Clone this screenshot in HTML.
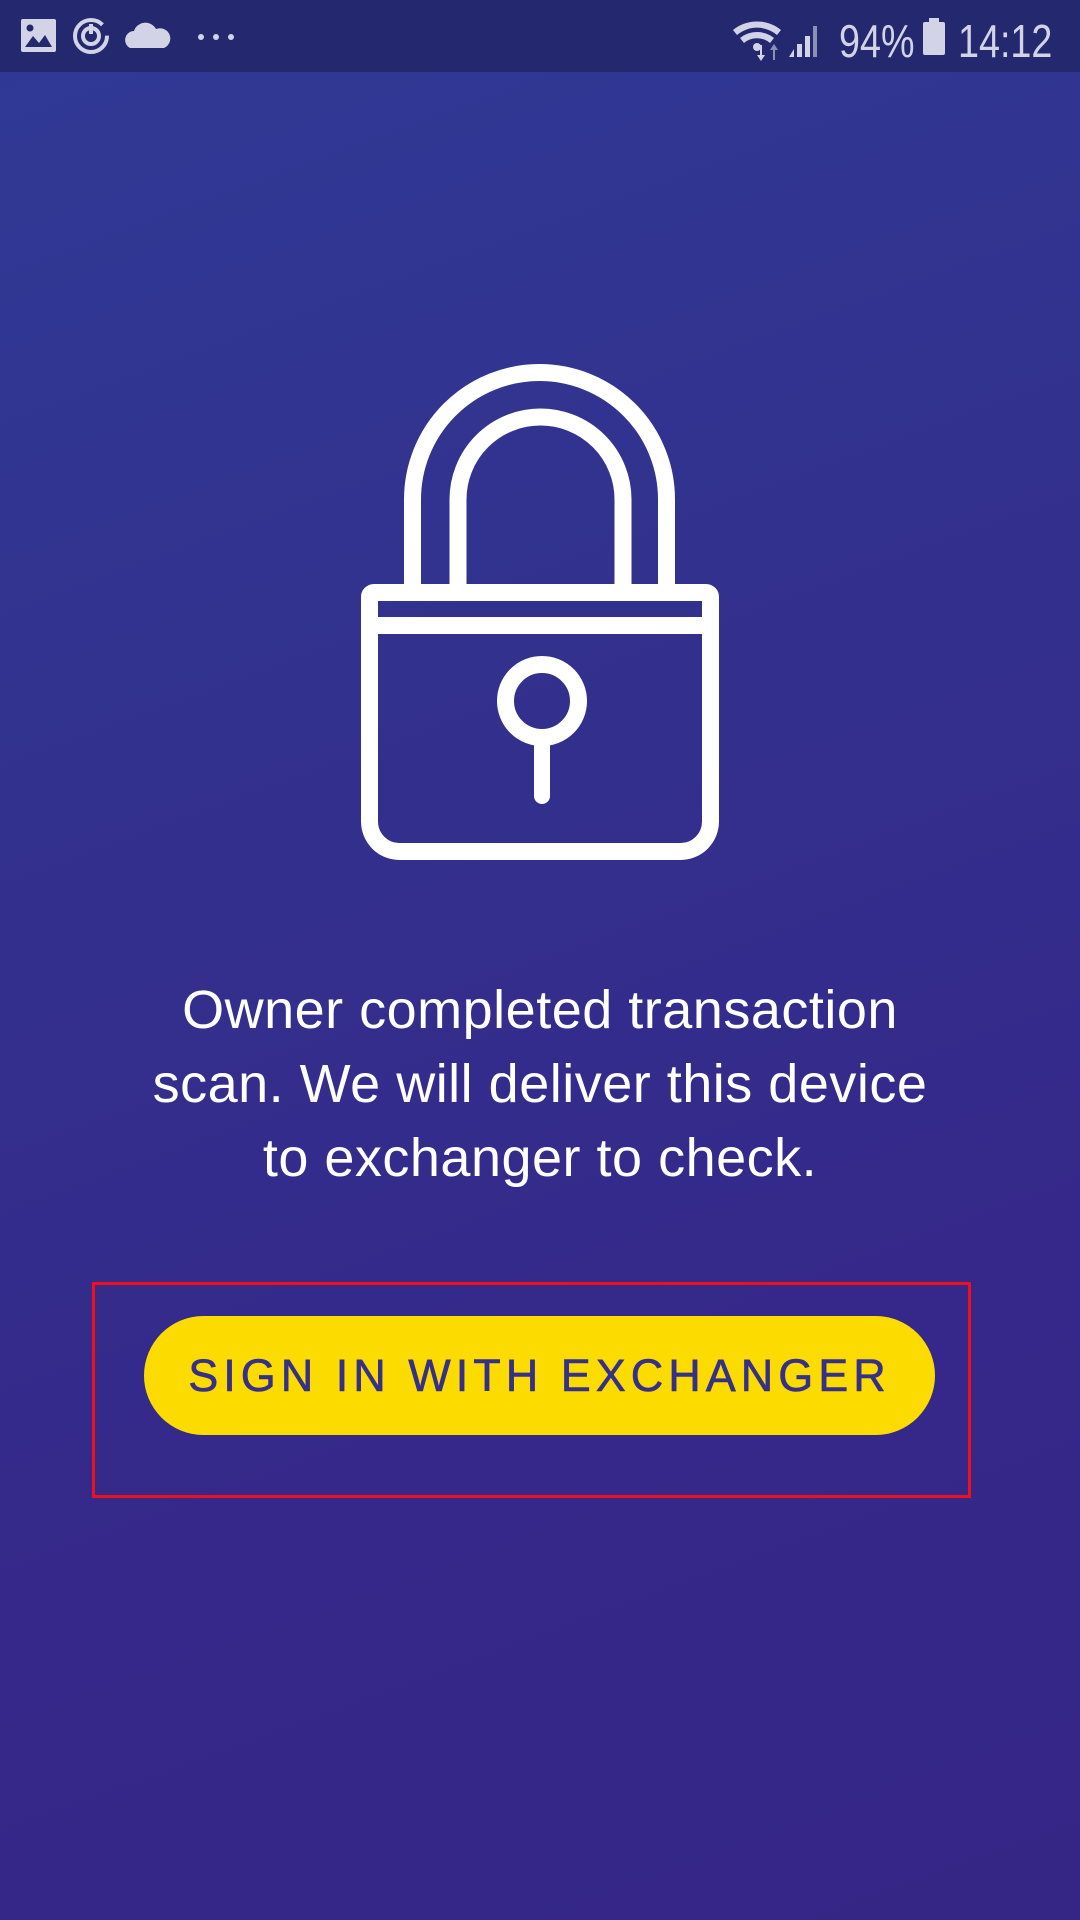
<!DOCTYPE html>
<html><head><meta charset="utf-8"><style>
html,body{margin:0;padding:0}
body{width:1080px;height:1920px;position:relative;overflow:hidden;
background:linear-gradient(160deg,#2f3a96 0%,#33308d 40%,#35288a 70%,#352686 100%);
font-family:"Liberation Sans",sans-serif}
.sb{position:absolute;left:0;top:0;width:1080px;height:72px;background:#24286e}
.sbt{position:absolute;top:14px;color:#d2d3e6;font-size:46px;transform:scaleX(.82);transform-origin:left top;font-family:"Liberation Sans Narrow","Liberation Sans",sans-serif}
.msg{position:absolute;left:0;width:1080px;top:973px;text-align:center;color:#fff;font-size:54px;line-height:74px;letter-spacing:0.5px}
.btn{position:absolute;left:144px;top:1316px;width:791px;height:119px;border-radius:60px;background:#fcdc00;color:#35308a;font-size:45px;letter-spacing:5px;text-align:center;line-height:119px;-webkit-text-stroke:0.6px #35308a}
.red{position:absolute;left:92px;top:1282px;width:873px;height:210px;border:3px solid #f0101c}
</style></head><body>
<div class="sb">
<svg width="1080" height="72" style="position:absolute;left:0;top:0" fill="#d2d3e6">
<rect x="21" y="19" width="35" height="33" rx="2"/>
<path d="M25 47 L33 36 L39 43 L45 35 L52 47 Z" fill="#24286e"/>
<circle cx="30" cy="28" r="3.5" fill="#24286e"/>
<circle cx="91" cy="36" r="16" fill="none" stroke="#d2d3e6" stroke-width="4" stroke-dasharray="88 12"/>
<circle cx="91" cy="36" r="8" fill="none" stroke="#d2d3e6" stroke-width="4"/>
<rect x="89" y="24" width="4" height="10"/>
<path d="M130 48 a9 9 0 0 1 4-17 a12 12 0 0 1 22-2 a10 10 0 0 1 8 19 Z"/>
<circle cx="201" cy="37" r="3"/><circle cx="216" cy="37" r="3"/><circle cx="231" cy="37" r="3"/>
<path d="M733 30 a38 38 0 0 1 48 0 l-4 5 a31 31 0 0 0 -40 0 Z"/>
<path d="M740 38 a27 27 0 0 1 34 0 l-4 5 a20 20 0 0 0 -26 0 Z"/>
<circle cx="757" cy="47" r="4"/>
<path d="M760 45 v10 h-3 l4 6 l4-6 h-3 v-10z"/>
<path d="M773 60 v-10 h-3 l4-6 l4 6 h-3 v10z" opacity=".6"/>
<path d="M789 57 h5 v-8 l-5 8z"/><rect x="797" y="44" width="5" height="13"/><rect x="805" y="36" width="5" height="21"/><rect x="813" y="26" width="4" height="31" opacity=".6"/>
<rect x="923" y="22" width="22" height="33" rx="2"/><rect x="929" y="18" width="10" height="5"/>
</svg>
<div class="sbt" style="left:839px">94%</div>
<div class="sbt" style="left:958px">14:12</div>
</div>
<svg width="1080" height="900" style="position:absolute;left:0;top:0" fill="none" stroke="#fff" stroke-width="17">
<path d="M412.5 592 V499.5 A127 127 0 0 1 666.5 499.5 V592"/>
<path d="M458 592 V499.5 A82.5 82.5 0 0 1 623 499.5 V592"/>
<path d="M374 592.5 H706 a4.5 4.5 0 0 1 4.5 4.5 V821.5 a30 30 0 0 1 -30 30 H399.5 a30 30 0 0 1 -30 -30 V597 a4.5 4.5 0 0 1 4.5 -4.5 Z" stroke-linejoin="round"/>
<line x1="369.5" y1="625.5" x2="710.5" y2="625.5"/>
<circle cx="542" cy="701" r="36.5"/>
<line x1="542" y1="740" x2="542" y2="796" stroke-width="16" stroke-linecap="round"/>
</svg>
<div class="msg">Owner completed transaction<br>scan. We will deliver this device<br>to exchanger to check.</div>
<div class="btn">SIGN IN WITH EXCHANGER</div>
<div class="red"></div>
</body></html>
